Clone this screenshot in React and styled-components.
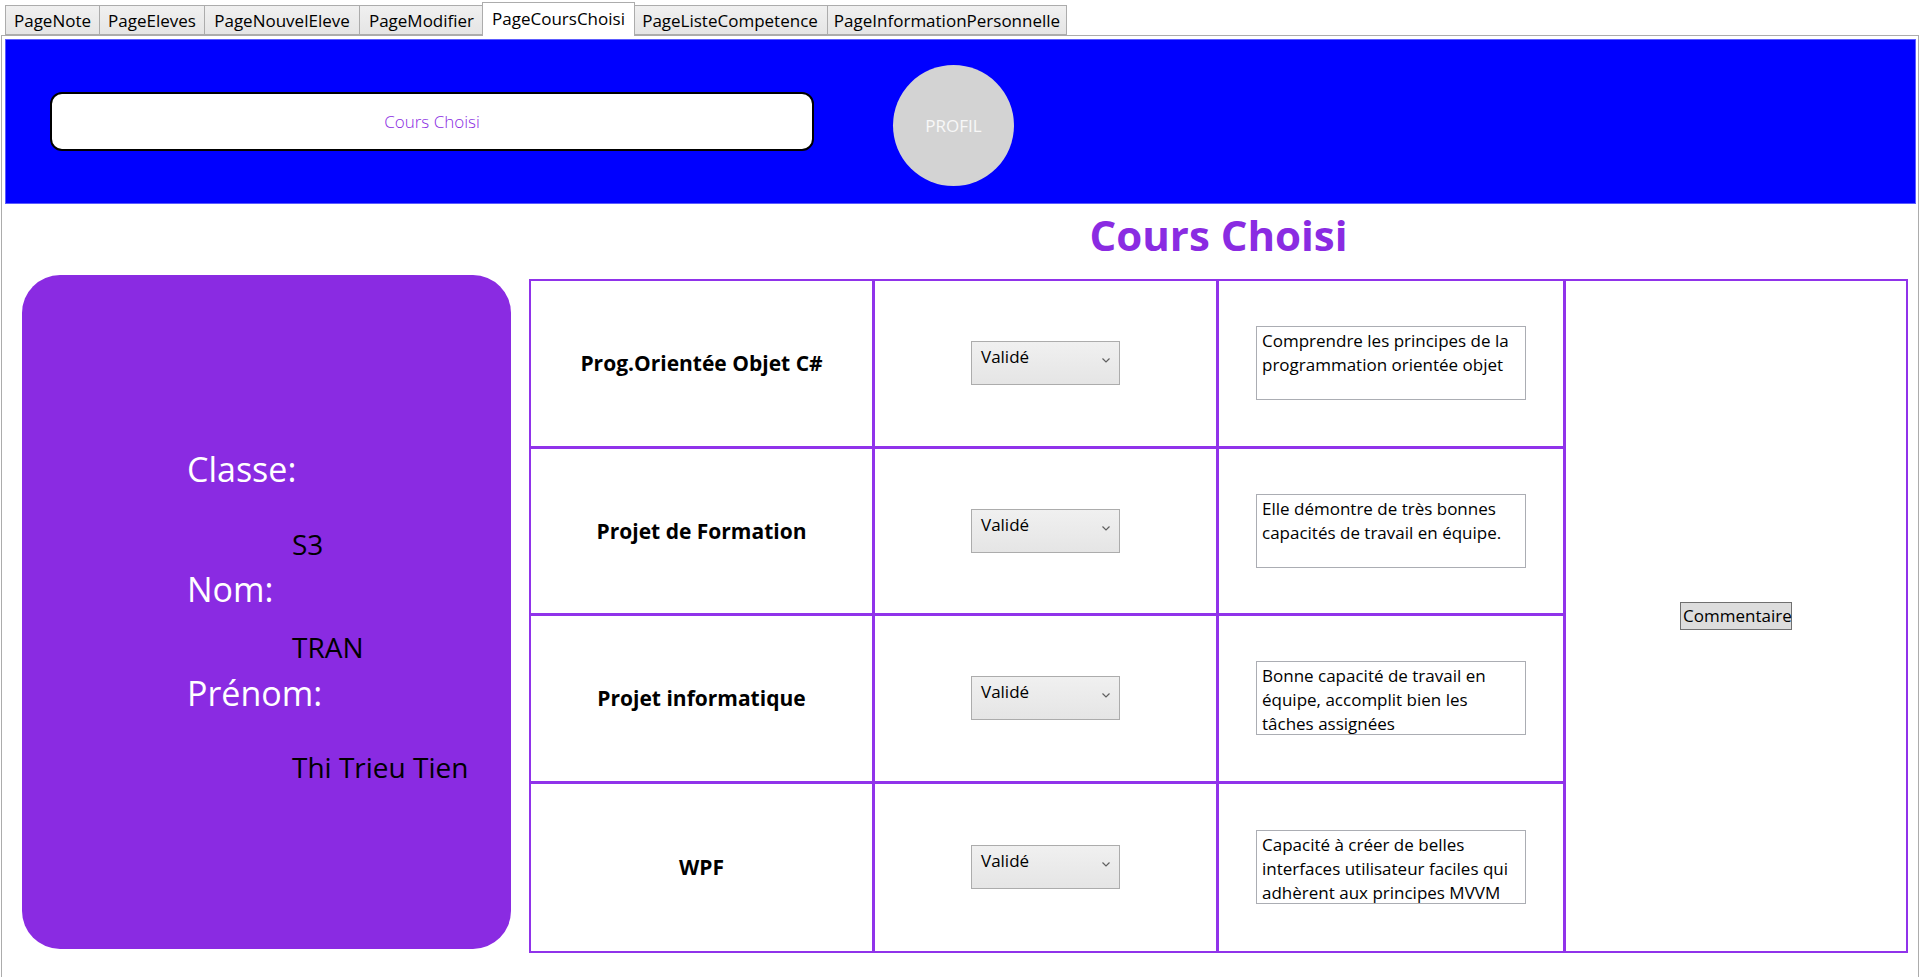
import React from 'react';
import styled, { createGlobalStyle } from 'styled-components';

const GlobalStyle = createGlobalStyle`
  html, body {
    margin: 0;
    padding: 0;
    background: #ffffff;
    overflow: hidden;
  }
  body {
    font-family: "Open Sans", "Noto Sans", sans-serif;
    color: #000000;
  }
`;

const PURPLE = '#8a2be2';
const LINE = '#9033ea';

const Window = styled.div`
  width: 1920px;
  height: 977px;
  overflow: hidden;
`;

const TabStrip = styled.div`
  display: flex;
  align-items: flex-end;
  height: 35px;
  padding-left: 5px;
  box-sizing: border-box;
`;

const Tab = styled.div`
  position: relative;
  box-sizing: border-box;
  width: ${(props) => props.$w}px;
  height: ${(props) => (props.$active ? 34 : 30)}px;
  margin: ${(props) => (props.$active ? '0 -2px -1px -2px' : '0')};
  z-index: ${(props) => (props.$active ? 2 : 1)};
  border: 1px solid #acacac;
  border-bottom: ${(props) => (props.$active ? 'none' : '1px solid #acacac')};
  border-left: ${(props) => (props.$first || props.$active ? '1px solid #acacac' : 'none')};
  background: ${(props) => (props.$active ? '#ffffff' : 'linear-gradient(#f0f0f0, #e5e5e5)')};
  display: flex;
  align-items: center;
  justify-content: center;
  font-size: 17px;
  white-space: nowrap;
  padding-bottom: ${(props) => (props.$active ? 2 : 0)}px;
`;

const Panel = styled.div`
  margin: 0 1px;
  height: 945px;
  box-sizing: border-box;
  border: 1px solid #acacac;
  padding: 3px 2px 0 3px;
`;

const Header = styled.div`
  height: 165px;
  box-sizing: border-box;
  background: #0000ff;
  border: 1px solid #5c5cff;
  display: flex;
  align-items: center;
  padding-left: 44px;
`;

const SearchBox = styled.div`
  width: 764px;
  height: 59px;
  box-sizing: border-box;
  background: #ffffff;
  border: 2px solid #000000;
  border-radius: 12px;
  display: flex;
  align-items: center;
  justify-content: center;
  color: ${PURPLE};
  font-size: 17px;
  font-weight: 300;
`;

const ProfileBubble = styled.div`
  width: 121px;
  height: 121px;
  margin: 8px 0 0 79px;
  border-radius: 50%;
  background: #d3d3d3;
  color: #f8f8f8;
  font-size: 17px;
  display: flex;
  align-items: center;
  justify-content: center;
`;

const Body = styled.div`
  display: grid;
  grid-template-columns: 489px 1379px;
  grid-template-rows: 71px 678px;
  column-gap: 18px;
  padding-left: 17px;
`;

const Title = styled.h1`
  grid-column: 2;
  grid-row: 1;
  margin: 0;
  padding-top: 2px;
  text-align: center;
  font-size: 42px;
  font-weight: 700;
  line-height: normal;
  color: ${PURPLE};
`;

const InfoCard = styled.div`
  grid-column: 1;
  grid-row: 2;
  height: 674px;
  box-sizing: border-box;
  background: ${PURPLE};
  border-radius: 38px;
  padding-top: 177px;
  display: flex;
  flex-direction: column;
`;

const Label = styled.div`
  padding-left: 165px;
  margin-top: ${(props) => props.$gap || 0}px;
  font-size: 34px;
  line-height: 34px;
  color: #ffffff;
`;

const Value = styled.div`
  padding-left: 270px;
  margin-top: ${(props) => props.$gap || 0}px;
  font-size: 28px;
  line-height: 28px;
  color: #000000;
`;

const CourseTable = styled.div`
  grid-column: 2;
  grid-row: 2;
  margin-top: 4px;
  height: 674px;
  box-sizing: border-box;
  border: 2px solid ${LINE};
  display: grid;
  grid-template-columns: 344px 344px 347px 1fr;
  grid-template-rows: repeat(4, 1fr);
`;

const Cell = styled.div`
  box-sizing: border-box;
  border-right: ${(props) => (props.$lastCol ? 'none' : `3px solid ${LINE}`)};
  border-bottom: ${(props) => (props.$lastRow ? 'none' : `3px solid ${LINE}`)};
  display: flex;
  align-items: center;
  justify-content: center;
  min-width: 0;
`;

const CommentCell = styled(Cell)`
  grid-column: 4;
  grid-row: 1 / span 4;
`;

const CourseName = styled.span`
  font-size: 21px;
  font-weight: 700;
  color: #000000;
`;

const StatusSelect = styled.div`
  width: 149px;
  height: 44px;
  box-sizing: border-box;
  border: 1px solid #acacac;
  background: linear-gradient(#f0f0f0, #e5e5e5);
  display: flex;
  align-items: flex-start;
  justify-content: space-between;
  padding: 3px 9px 0 9px;
  font-size: 17px;
  line-height: 24px;
`;

const Chevron = styled.svg`
  margin-top: 13px;
`;

const NoteBox = styled.div`
  width: 270px;
  height: 74px;
  box-sizing: border-box;
  border: 1px solid #abadb3;
  background: #ffffff;
  padding: 2px 4px 0 5px;
  font-size: 17px;
  line-height: 24px;
  white-space: pre-line;
  overflow: hidden;
`;

const CommentButton = styled.button`
  width: 112px;
  height: 28px;
  box-sizing: border-box;
  border: 1px solid #707070;
  background: #dddddd;
  padding: 0 2px;
  font-family: "Open Sans", "Noto Sans", sans-serif;
  font-size: 17px;
  line-height: 24px;
  color: #000000;
  white-space: nowrap;
`;

const tabs = [
  { label: 'PageNote', w: 95 },
  { label: 'PageEleves', w: 105 },
  { label: 'PageNouvelEleve', w: 155 },
  { label: 'PageModifier', w: 124 },
  { label: 'PageCoursChoisi', w: 153, active: true },
  { label: 'PageListeCompetence', w: 195 },
  { label: 'PageInformationPersonnelle', w: 239 },
];

const courses = [
  {
    name: 'Prog.Orientée Objet C#',
    note: 'Comprendre les principes de la\nprogrammation orientée objet',
  },
  {
    name: 'Projet de Formation',
    note: 'Elle démontre de très bonnes\ncapacités de travail en équipe.',
  },
  {
    name: 'Projet informatique',
    note: 'Bonne capacité de travail en\néquipe, accomplit bien les\ntâches assignées',
  },
  {
    name: 'WPF',
    note: 'Capacité à créer de belles\ninterfaces utilisateur faciles qui\nadhèrent aux principes MVVM',
  },
];

function App() {
  return (
    <Window>
      <GlobalStyle />
      <TabStrip>
        {tabs.map((t, i) => (
          <Tab key={t.label} $w={t.w} $active={t.active} $first={i === 0}>
            {t.label}
          </Tab>
        ))}
      </TabStrip>
      <Panel>
        <Header>
          <SearchBox>Cours Choisi</SearchBox>
          <ProfileBubble>PROFIL</ProfileBubble>
        </Header>
        <Body>
          <Title>Cours Choisi</Title>
          <InfoCard>
            <Label>Classe:</Label>
            <Value $gap={44}>S3</Value>
            <Label $gap={14}>Nom:</Label>
            <Value $gap={27}>TRAN</Value>
            <Label $gap={15}>Prénom:</Label>
            <Value $gap={43}>Thi Trieu Tien</Value>
          </InfoCard>
          <CourseTable>
            {courses.map((c, i) => (
              <React.Fragment key={c.name}>
                <Cell $lastRow={i === courses.length - 1} style={{ gridColumn: 1, gridRow: i + 1 }}>
                  <CourseName>{c.name}</CourseName>
                </Cell>
                <Cell $lastRow={i === courses.length - 1} style={{ gridColumn: 2, gridRow: i + 1 }}>
                  <StatusSelect>
                    <span>Validé</span>
                    <Chevron width="8" height="5" viewBox="0 0 8 5">
                      <path d="M0.5 0.5 L4 4 L7.5 0.5" fill="none" stroke="#606060" strokeWidth="1.2" />
                    </Chevron>
                  </StatusSelect>
                </Cell>
                <Cell $lastRow={i === courses.length - 1} style={{ gridColumn: 3, gridRow: i + 1 }}>
                  <NoteBox>{c.note}</NoteBox>
                </Cell>
              </React.Fragment>
            ))}
            <CommentCell $lastCol $lastRow>
              <CommentButton>Commentaire</CommentButton>
            </CommentCell>
          </CourseTable>
        </Body>
      </Panel>
    </Window>
  );
}

export default App;
